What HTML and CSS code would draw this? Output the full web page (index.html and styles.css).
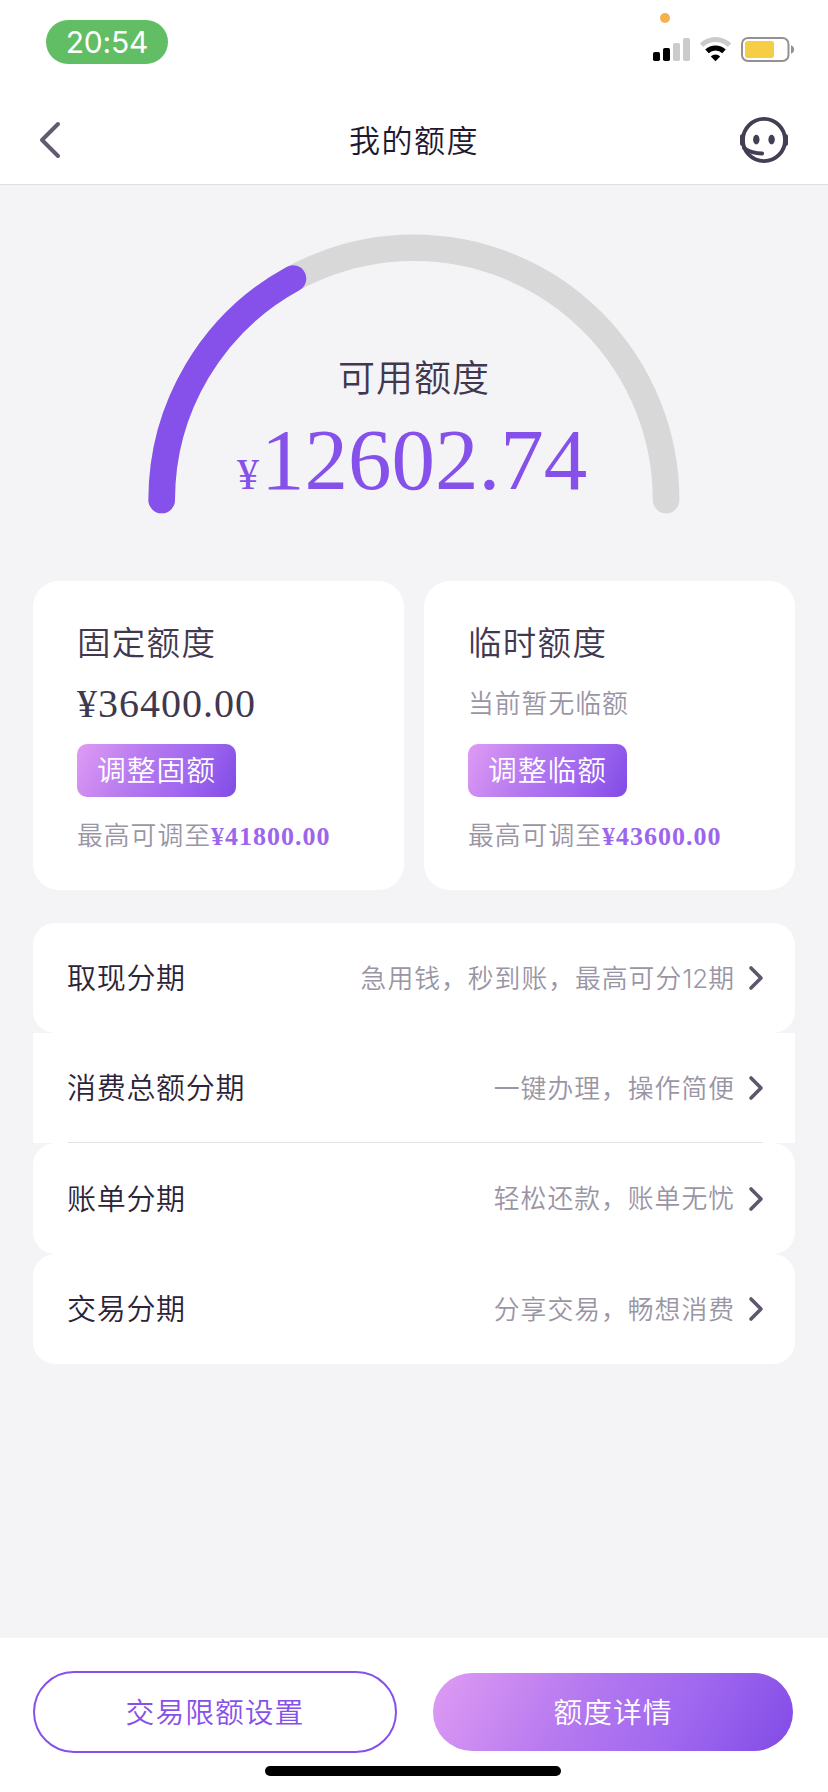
FILE: index.html
```html
<!DOCTYPE html>
<html lang="zh-CN">
<head>
<meta charset="utf-8">
<title>我的额度</title>
<link rel="stylesheet" href="styles.css">
</head>
<body>
<div class="screen">
  <header class="top">
    <div class="status">
      <div class="time">20:54</div>
      <svg class="indicators" width="150" height="74" viewBox="650 0 150 74">
        <circle cx="665" cy="18" r="5" fill="#f6b04e"/>
        <rect x="653" y="52" width="7" height="9" rx="1.8"/>
        <rect x="663" y="48" width="7" height="13" rx="1.8"/>
        <rect x="673" y="43" width="7" height="18" rx="1.8" fill="#cbcbcb"/>
        <rect x="683" y="38" width="7" height="23" rx="1.8" fill="#cbcbcb"/>
        <g fill="none" stroke-width="5">
          <path d="M701.6 45.3a19.6 19.6 0 0 1 27.8 0" stroke="#cbcbcb"/>
          <path d="M707 51.4a12.2 12.2 0 0 1 17 0" stroke="#000"/>
        </g>
        <path d="M715.5 61.2l-4.7-4.8a6.7 6.7 0 0 1 9.4 0z"/>
        <rect x="742" y="38" width="46.5" height="23" rx="6" fill="none" stroke="#929292" stroke-width="2"/>
        <rect x="745" y="41" width="29" height="17" rx="2.5" fill="#f6cd45"/>
        <path d="M791 45.3c4.2 1.2 4.2 7.2 0 8.4z" fill="#929292"/>
      </svg>
    </div>
    <nav class="nav">
      <svg class="nav-icon" width="48" height="48" viewBox="0 0 48 48"><path d="M22 8L6 24L22 40" fill="none" stroke="#625a70" stroke-width="4" stroke-linecap="round" stroke-linejoin="round"/></svg>
      <h1 class="nav-title">我的额度</h1>
      <svg class="nav-icon" width="48" height="48" viewBox="0 0 48 48">
        <circle cx="24" cy="24" r="21.100" fill="none" stroke="#443d54" stroke-width="3.900"/>
        <path d="M4.500 18H2.500Q0 18 0 20.500V27.500Q0 30 2.500 30H4.500zM43.500 18H45.500Q48 18 48 20.500V27.500Q48 30 45.500 30H43.500z" fill="#443d54"/>
        <ellipse cx="16.300" cy="23.600" rx="3.200" ry="4.900" fill="#443d54"/>
        <ellipse cx="31.600" cy="23.600" rx="3.200" ry="4.900" fill="#443d54"/>
        <path d="M4 32Q12 37.600 22.200 37.500" fill="none" stroke="#443d54" stroke-width="3.800" stroke-linecap="round"/>
      </svg>
    </nav>
  </header>

  <main class="content">
    <section class="gauge">
      <svg class="gauge-arc" width="532" height="280" viewBox="148 234 532 280">
        <g fill="none" stroke-width="26.600" stroke-linecap="round">
          <path d="M161.700 500A252.200 252.200 0 0 1 666.100 500" stroke="#d8d8d8"/>
          <path d="M161.700 500A252.200 252.200 0 0 1 293 278.600" stroke="#8651ea"/>
        </g>
      </svg>
      <div class="gauge-text">
        <div class="gauge-label">可用额度</div>
        <div class="gauge-amount"><span class="gauge-yen">¥</span>12602.74</div>
      </div>
    </section>

    <section class="cards">
      <article class="card">
        <h2 class="card-title">固定额度</h2>
        <div class="card-value">¥36400.00</div>
        <button class="adjust">调整固额</button>
        <p class="card-note">最高可调至<b class="note-amount">¥41800.00</b></p>
      </article>
      <article class="card">
        <h2 class="card-title">临时额度</h2>
        <div class="card-value card-empty">当前暂无临额</div>
        <button class="adjust">调整临额</button>
        <p class="card-note">最高可调至<b class="note-amount">¥43600.00</b></p>
      </article>
    </section>

    <section class="list">
      <div class="row"><span class="row-name">取现分期</span><span class="row-desc">急用钱，秒到账，最高可分<span class="row-num">12</span>期</span><svg class="arrow" width="16" height="26" viewBox="0 0 16 26"><path d="M3 3L13 13L3 23"/></svg></div>
      <div class="row row-flat"><span class="row-name">消费总额分期</span><span class="row-desc">一键办理，操作简便</span><svg class="arrow" width="16" height="26" viewBox="0 0 16 26"><path d="M3 3L13 13L3 23"/></svg></div>
      <div class="row row-tall"><span class="row-name">账单分期</span><span class="row-desc">轻松还款，账单无忧</span><svg class="arrow" width="16" height="26" viewBox="0 0 16 26"><path d="M3 3L13 13L3 23"/></svg></div>
      <div class="row"><span class="row-name">交易分期</span><span class="row-desc">分享交易，畅想消费</span><svg class="arrow" width="16" height="26" viewBox="0 0 16 26"><path d="M3 3L13 13L3 23"/></svg></div>
    </section>
  </main>

  <footer class="footer">
    <div class="actions">
      <button class="action action-outline">交易限额设置</button>
      <button class="action action-fill">额度详情</button>
    </div>
    <div class="home-bar"></div>
  </footer>
</div>
</body>
</html>
```

FILE: styles.css
```css
* { box-sizing: border-box; margin: 0; padding: 0; }

body {
  background: #f4f4f7;
  font-family: Inter, "Noto Sans CJK SC", sans-serif;
  font-weight: 350;
  color: #3f384f;
}

button { font: inherit; border: 0; }
svg { display: block; flex: none; }

.screen {
  width: 828px;
  height: 1792px;
  display: flex;
  flex-direction: column;
  overflow: hidden;
}

.top { height: 185px; background: #fff; border-bottom: 1px solid #dfdfe2; }

.status {
  height: 94px;
  padding: 0 28px 0 46px;
  display: flex;
  justify-content: space-between;
  align-items: flex-start;
}

.time {
  width: 122px;
  height: 44px;
  margin-top: 20px;
  border-radius: 22px;
  background: #61be64;
  color: #fff;
  font: 400 30px/44px Inter, sans-serif;
  letter-spacing: -0.2px;
  text-align: center;
}

.nav {
  height: 91px;
  padding: 1px 40px 0 36px;
  display: flex;
  justify-content: space-between;
  align-items: center;
}

.nav-title { padding: 0 0 4px 4px; font-size: 31px; font-weight: 350; letter-spacing: 1.5px; color: #1f1830; }

.content { flex: 1; padding: 0 33px; }

.gauge { height: 396px; padding-top: 49px; display: grid; justify-items: center; align-items: start; }
.gauge-arc, .gauge-text { grid-area: 1 / 1; }
.gauge-text { padding-top: 118px; text-align: center; }
.gauge-label { font-size: 37px; line-height: 54px; letter-spacing: 1px; }
.gauge-amount {
  margin: 4px 4px 0 0;
  font: 400 87px/100px "Liberation Serif", serif;
  color: #8651ea;
}
.gauge-yen { font-size: 44px; padding-right: 2px; }

.cards { display: grid; grid-template-columns: 371px 371px; gap: 20px; }
.card { height: 309px; padding: 38px 44px; border-radius: 26px; background: #fff; }
.card-title { font-size: 33.500px; line-height: 48px; font-weight: 350; letter-spacing: 1.300px; }
.card-value {
  height: 77px;
  font: 400 40px/74px "Liberation Serif", serif;
  letter-spacing: 1px;
}
.card-empty { font: 350 25.800px/74px Inter, "Noto Sans CJK SC", sans-serif; letter-spacing: 1px; color: #9a95a4; }
.adjust {
  display: block;
  width: 159px;
  height: 53px;
  border-radius: 10px;
  background: linear-gradient(118deg, #df9bf3 0%, #b377ef 42%, #a068ef 68%, #814be6 100%);
  color: #fff;
  font-size: 28.800px;
  line-height: 53px;
  letter-spacing: 1px;
}
.card-note { font-size: 25.800px; line-height: 38px; margin-top: 20px; letter-spacing: 1px; color: #9a95a4; white-space: nowrap; }
.note-amount { font: 700 26px/38px "Liberation Serif", serif; color: #9c65ee; }

.list { margin-top: 33px; }
.row {
  height: 110px;
  padding: 0 31px 0 34px;
  border-radius: 22px;
  background: #fff;
  display: flex;
  align-items: center;
}
.row-flat {
  border-radius: 0;
  background: linear-gradient(#e3e2e7, #e3e2e7) 35px 109px / 695px 1px no-repeat, #fff;
}
.row-tall { height: 111px; }
.row-name { padding-bottom: 4px; font-size: 29px; letter-spacing: 0.700px; font-weight: 350; color: #2b2439; }
.row-desc { margin-left: auto; padding-bottom: 4px; font-size: 25.800px; letter-spacing: 1px; color: #9a95a4; }
.row-num { letter-spacing: 0; }
.arrow { margin-left: 13px; }
.arrow path { fill: none; stroke: #5f566e; stroke-width: 3.600; stroke-linecap: round; stroke-linejoin: round; }

.footer { height: 154px; background: #fff; padding: 33px 35px 0 33px; display: flex; flex-direction: column; align-items: center; }
.actions { width: 100%; display: flex; justify-content: space-between; align-items: center; }
.action { padding-bottom: 4px; font-size: 28.800px; letter-spacing: 1px; }
.action-outline { width: 364px; height: 82px; border: 2px solid #8651ea; border-radius: 41px; background: #fff; color: #8651ea; }
.action-fill {
  width: 360px;
  height: 78px;
  border-radius: 39px;
  color: #fff;
  background: linear-gradient(118deg, #df9bf3 0%, #b377ef 42%, #a068ef 68%, #814be6 100%);
}
.home-bar { width: 296px; height: 10px; margin-top: 13px; border-radius: 5px; background: #000; }
```
